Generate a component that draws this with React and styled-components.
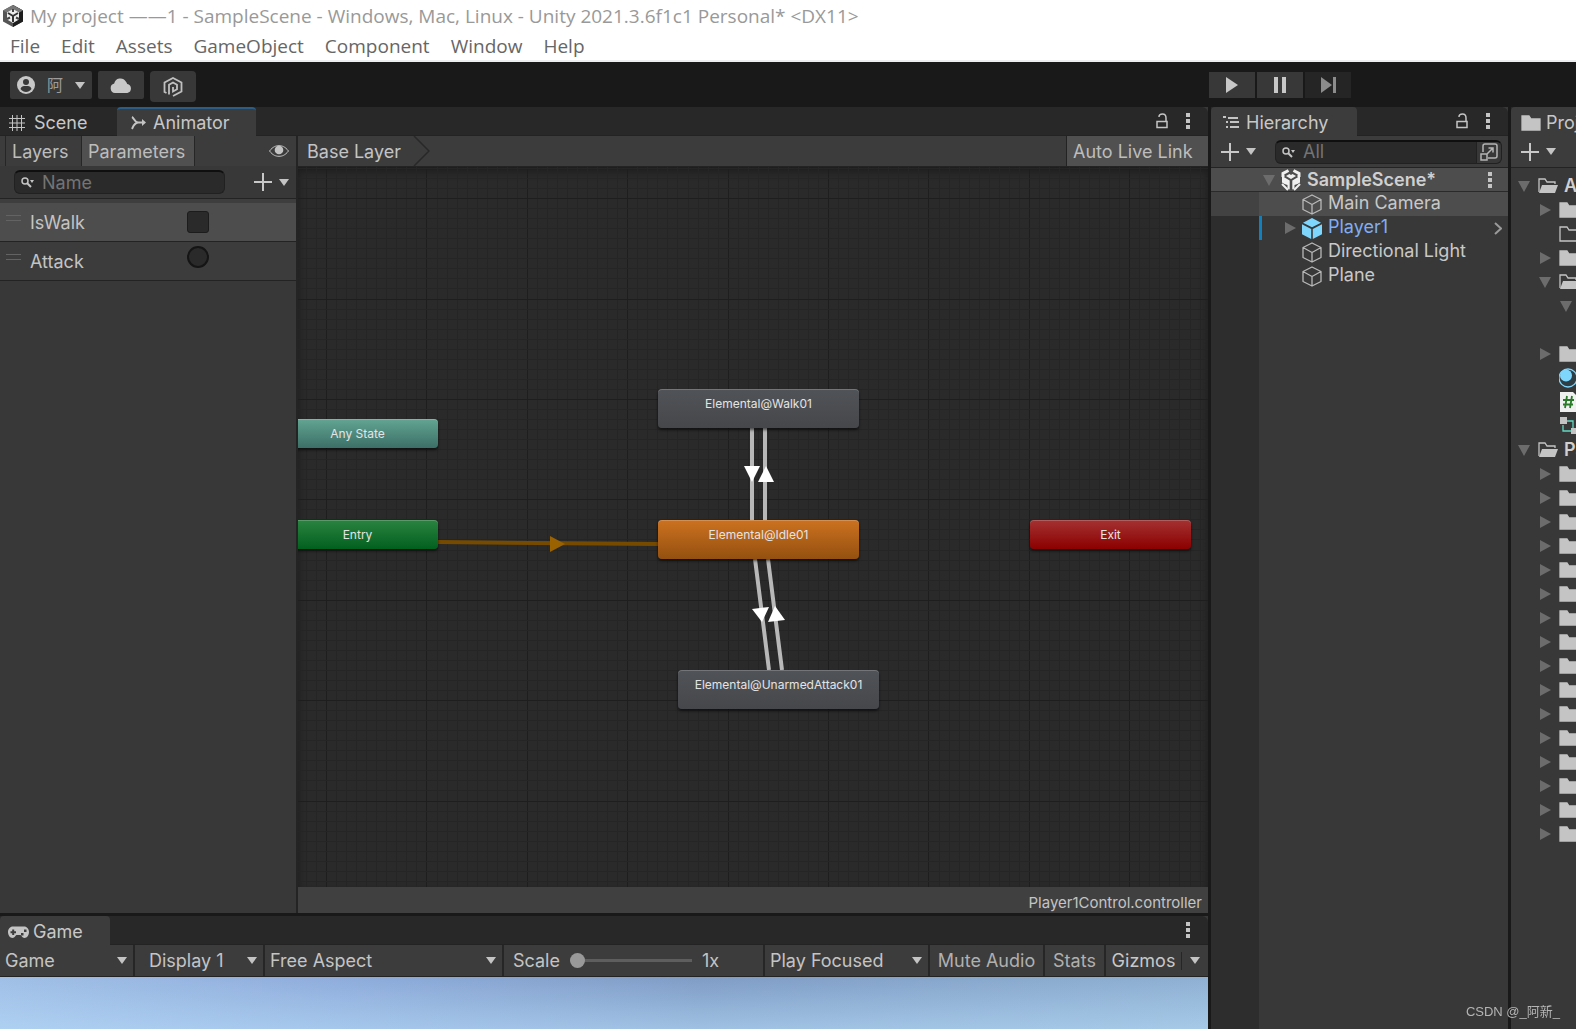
import React, { useState } from "react";
import styled, { createGlobalStyle, css } from "styled-components";

const GlobalStyle = createGlobalStyle`
    * {
        box-sizing: border-box;
    }

    body {
        margin: 0;
        background: #191919;
        font-family: Inter, "Noto Sans CJK SC", sans-serif;
        font-size: 18px;
        line-height: 24px;
        color: #c4c4c4;
    }

    button, input, select {
        font: inherit;
        color: inherit;
        margin: 0;
    }

    svg {
        display: block;
        flex-shrink: 0;
    }
`;

const MENUS = ["File", "Edit", "Assets", "GameObject", "Component", "Window", "Help"];

const NODES = [
    { label: "Any State", kind: "any", x: -21, y: 252 },
    { label: "Entry", kind: "entry", x: -21, y: 353 },
    { label: "Exit", kind: "exit", x: 732, y: 353 },
    { label: "Elemental@Walk01", kind: "state", x: 360, y: 222 },
    { label: "Elemental@Idle01", kind: "initial", x: 360, y: 353 },
    { label: "Elemental@UnarmedAttack01", kind: "state", x: 380, y: 503 },
];

const NODE_COLORS = {
    any: ["#62a592", "#3c6f67"],
    entry: ["#2b8340", "#02601f"],
    exit: ["#a43232", "#8c0000"],
    state: ["#505357", "#46474b"],
    initial: ["#cc7220", "#945010"],
};

const OBJECTS = [
    { name: "Main Camera", selected: true },
    { name: "Player1", prefab: true },
    { name: "Directional Light" },
    { name: "Plane" },
];

const PROJECT_ROWS = [
    { depth: 0, arrow: "down", icon: "open", name: "Assets" },
    { depth: 1, arrow: "right", icon: "folder" },
    { depth: 1, icon: "empty" },
    { depth: 1, arrow: "right", icon: "folder" },
    { depth: 1, arrow: "down", icon: "open" },
    { depth: 2, arrow: "down" },
    { depth: 2 },
    { depth: 1, arrow: "right", icon: "folder" },
    { depth: 1, icon: "material" },
    { depth: 1, icon: "script" },
    { depth: 1, icon: "controller" },
    { depth: 0, arrow: "down", icon: "open", name: "Packages" },
    ...Array.from({ length: 16 }, () => ({ depth: 1, arrow: "right", icon: "folder" })),
];

/* ---------- icons ---------- */

const UnityLogo = () => (
    <svg width="22" height="24" viewBox="0 0 22 24">
        <path d="M11 1L21 6.500V17.500L11 23L1 17.500V6.500Z" fill="#555" />
        <path d="M11 1L21 6.500V17.500L11 23V12Z" fill="#1d1d1d" />
        <path d="M11 1L21 6.500L11 12L1 6.500Z" fill="#777" />
        <path d="M11 5L17 8.500V15.500L11 19L5 15.500V8.500Z" fill="#eee" />
        <path d="M11 12V18M11 12L6 9M11 12L16 9" stroke="#333" strokeWidth="2" />
        <path d="M11 5V8M5 15L8 13.500M17 15L14 13.500" stroke="#444" strokeWidth="2" />
    </svg>
);

const SceneLogo = () => (
    <svg width="20" height="22" viewBox="0 0 20 22">
        <path d="M7.500 1.500L2 4.500V8M12.500 1.500L18 4.500V8" fill="none" stroke="#f0f0f0" strokeWidth="3" />
        <path d="M5 7L8.500 5L10 6L11.500 5L15 7L10 10Z" fill="#f0f0f0" />
        <path d="M1 7L8.700 11.500V20.500L6.500 19.500V16L3.500 15L1 13.500Z" fill="#f0f0f0" />
        <path d="M19 7L11.300 11.500V20.500L13.500 19.500V16L16.500 15L19 13.500Z" fill="#f0f0f0" />
        <path d="M1 15L4 18L7 21M19 15L16 18L13 21" fill="none" stroke="#f0f0f0" strokeWidth="2" />
    </svg>
);

const UserIcon = () => (
    <svg width="18" height="18" viewBox="0 0 18 18">
        <circle cx="9" cy="9" r="9" fill="#c8c8c8" />
        <circle cx="9" cy="6" r="3" fill="#383838" />
        <path d="M3.500 13C4 10.500 6 10 9 10S14 10.500 14.500 13C13 15 11 16 9 16S5 15 3.500 13Z" fill="#383838" />
    </svg>
);

const CloudIcon = () => (
    <svg width="22" height="15" viewBox="0 0 22 15" fill="#c8c8c8">
        <path d="M5 15A4.800 4.800 0 0 1 4.200 5.600A6.300 6.300 0 0 1 15.800 3.500A5 5 0 0 1 17.200 6A4.600 4.600 0 0 1 17.400 15Z" />
    </svg>
);

const PlasticIcon = () => (
    <svg width="20" height="20" viewBox="0 0 20 20" fill="none" stroke="#c0c0c0" strokeWidth="1.800">
        <path d="M3.500 16L1.500 15V5.500L10 1L18.500 5.500V14.500L10 19" />
        <path d="M6 17.500V7.800L10 5.500L14 7.800V12.200L10 14.500V10" />
    </svg>
);

const Caret = ({ color = "#c4c4c4" }) => (
    <svg width="10" height="7" viewBox="0 0 10 7">
        <path d="M0 0H10L5 7Z" fill={color} />
    </svg>
);

const Foldout = ({ open }) => (
    <svg width="12" height="12" viewBox="0 0 12 12" fill="#6c6c6c">
        <path d={open ? "M0 1H12L6 12Z" : "M1 0L12 6L1 12Z"} />
    </svg>
);

const GridIcon = () => (
    <svg width="16" height="16" viewBox="0 0 16 16" stroke="#c4c4c4">
        <path d="M3.500 0V16M8 0V16M12.500 0V16M0 3.500H16M0 8H16M0 12.500H16" fill="none" />
    </svg>
);

const AnimatorIcon = () => (
    <svg width="16" height="14" viewBox="0 0 16 14" fill="none" stroke="#c4c4c4" strokeWidth="2">
        <path d="M1 1C3 2 3 6 7 6.500H13M1 13C2 11 3 7 7 6.500" />
        <path d="M11 3L15 6.500L11 10Z" fill="#c4c4c4" stroke="none" />
    </svg>
);

const HierarchyIcon = () => (
    <svg width="16" height="14" viewBox="0 0 16 14" fill="#c4c4c4">
        <path d="M0 0H3V2H0ZM5 1H15V3H5ZM3 5H5V7H3ZM7 5H16V7H7ZM3 10H5V12H3ZM7 10H16V12H7Z" />
    </svg>
);

const GameIcon = () => (
    <svg width="21" height="12" viewBox="0 0 21 12">
        <path d="M5 0.500H16C19 0.500 21 3 21 6S19 12 16.500 12C14 12 13.500 9 12.500 9H8.500C7.500 9 7 12 4.500 12C2 12 0 9 0 6S2 0.500 5 0.500Z" fill="#c4c4c4" />
        <path d="M5.200 3.500V9M2.500 6.200H8" stroke="#3c3c3c" strokeWidth="2" />
        <path d="M13 7H15.500V9.500H13ZM16 3.500H18.500V6H16Z" fill="#3c3c3c" />
    </svg>
);

const LockIcon = () => (
    <svg width="12" height="16" viewBox="0 0 12 16" fill="none" stroke="#c4c4c4" strokeWidth="1.500">
        <path d="M1 8.500H11V14.500H1Z" />
        <path d="M10 8V5C10 2 9 1 6.500 1S3 2 3 4" />
    </svg>
);

const DotsIcon = () => (
    <svg width="4" height="16" viewBox="0 0 4 16" fill="#c4c4c4">
        <path d="M0 0H4V4H0ZM0 6H4V10H0ZM0 12H4V16H0Z" />
    </svg>
);

const EyeIcon = () => (
    <svg width="20" height="12" viewBox="0 0 20 12">
        <path d="M0.500 6C4 1.500 7 0.700 10 0.700S16 1.500 19.500 6C16 10.500 13 11.300 10 11.300S4 10.500 0.500 6Z" fill="none" stroke="#c4c4c4" />
        <circle cx="10" cy="5" r="4.300" fill="#c4c4c4" />
    </svg>
);

const SearchIcon = () => (
    <svg width="13" height="11" viewBox="0 0 13 11" fill="none" stroke="#c4c4c4" strokeWidth="1.500">
        <circle cx="4" cy="4" r="3" />
        <path d="M6 6L10 10" strokeWidth="2" />
        <path d="M9 3H13L11 6Z" fill="#c4c4c4" stroke="none" />
    </svg>
);

const PlusIcon = () => (
    <svg width="18" height="18" viewBox="0 0 18 18">
        <path d="M9 0V18M0 9H18" stroke="#c8c8c8" strokeWidth="2" />
    </svg>
);

const PickerIcon = () => (
    <svg width="18" height="18" viewBox="0 0 18 18" fill="none" stroke="#b4b4b4" strokeWidth="1.500">
        <path d="M3 9V3Q3 1 5 1H15Q17 1 17 3V13Q17 15 15 15H8" />
        <path d="M1 11H7V17H1ZM7.500 10.500L13 5M8.500 5H13V9.500" />
    </svg>
);

const CubeIcon = ({ prefab }) => (
    <svg width="20" height="21" viewBox="0 0 20 21" strokeLinejoin="round">
        {prefab ? (
            <g fill="#7fd6fd">
                <path d="M10 0L19 4.800L10 9.300L1 4.800Z" />
                <path d="M0 6.300L9.200 11V21L0 16.200Z" />
                <path d="M20 6.300L10.800 11V21L20 16.200Z" />
            </g>
        ) : (
            <path d="M10 1L19 5.500V15.500L10 20L1 15.500V5.500ZM1 5.500L10 10.500L19 5.500M10 10.500V20" fill="none" stroke="#b8b8b8" strokeWidth="1.300" />
        )}
    </svg>
);

const ChevronIcon = () => (
    <svg width="8" height="13" viewBox="0 0 8 13">
        <path d="M1 1L7 6.500L1 12" fill="none" stroke="#9a9a9a" strokeWidth="2" />
    </svg>
);

const AssetIcon = ({ kind }) => {
    if (kind === "material") {
        return (
            <svg width="20" height="20" viewBox="0 0 20 20">
                <circle cx="9" cy="10" r="9" fill="#2f3e45" stroke="#7fd6fd" strokeWidth="1.300" />
                <circle cx="7" cy="7.500" r="6" fill="#7fd6fd" />
            </svg>
        );
    }
    if (kind === "script") {
        return (
            <svg width="20" height="20" viewBox="0 0 20 20">
                <path d="M1 0H14L19 5V20H1Z" fill="#f0f0f0" />
                <path d="M8 4L6 16M13 4L11 16M4 8H15M4 12.500H14" stroke="#2a7a2a" strokeWidth="1.800" />
            </svg>
        );
    }
    if (kind === "controller") {
        return (
            <svg width="20" height="18" viewBox="0 0 20 18">
                <path d="M8 4H14V11M4 8V14H12" fill="none" stroke="#5fd9c0" strokeWidth="1.300" />
                <path d="M1 0H8V7H1ZM12 11H19V17H12Z" fill="#c4c4c4" />
            </svg>
        );
    }
    if (kind === "open") {
        return (
            <svg width="20" height="16" viewBox="0 0 20 16">
                <path d="M1 14V1H7L9 4H17V6" fill="none" stroke="#c4c4c4" strokeWidth="1.300" />
                <path d="M4 7H20L17 15H1Z" fill="#c4c4c4" />
            </svg>
        );
    }
    return (
        <svg width="20" height="16" viewBox="0 0 20 16">
            <path
                d="M1 1H8L10 4H19V15H1Z"
                fill={kind === "empty" ? "none" : "#c4c4c4"}
                stroke="#c4c4c4"
                strokeWidth="1.300"
            />
        </svg>
    );
};

/* ---------- window header ---------- */

const Window = styled.div`
    display: flex;
    flex-direction: column;
    height: 100vh;
    overflow: hidden;
`;

const TitleBar = styled.header`
    background: #fff;
    border-bottom: 2px solid #eceff0;
    font-family: "Open Sans", "Noto Sans CJK SC", sans-serif;
`;

const Title = styled.h1`
    display: flex;
    align-items: center;
    gap: 6px;
    height: 31px;
    margin: 0;
    padding-left: 2px;
    font-size: 19px;
    font-weight: 400;
    color: #999;
    white-space: pre;
`;

const MenuBar = styled.nav`
    display: flex;
    gap: 21px;
    height: 29px;
    padding-left: 10px;
`;

const MenuButton = styled.button`
    padding: 0;
    border: none;
    background: none;
    font-size: 19px;
    color: #666;
    cursor: pointer;
`;

const AppToolbar = styled.div`
    display: flex;
    align-items: flex-start;
    gap: 6px;
    height: 45px;
    flex-shrink: 0;
    padding: 9px 0 0 10px;
    background: #191919;
`;

const ToolButton = styled.button`
    display: flex;
    align-items: center;
    justify-content: center;
    gap: 12px;
    width: ${({ $wide }) => ($wide ? 82 : 46)}px;
    height: ${({ $tall }) => ($tall ? 31 : 28)}px;
    padding: 0;
    border: none;
    border-radius: ${({ $tall }) => ($tall ? 4 : 2)}px;
    background: #383838;
    font-size: 16px;
    color: #9c9c9c;
    cursor: pointer;
`;

const PlayGroup = styled.div`
    display: flex;
    gap: 2px;
    margin: 1px 225px 0 auto;
`;

const PlayButton = styled.button`
    display: flex;
    align-items: center;
    justify-content: center;
    width: 46px;
    height: 26px;
    padding: 0;
    border: none;
    background: ${({ disabled }) => (disabled ? "#252525" : "#383838")};
`;

/* ---------- docking ---------- */

const Workspace = styled.div`
    display: flex;
    gap: 3px;
    flex: 1;
    min-height: 0;
    background: #191919;
`;

const Column = styled.div`
    display: flex;
    flex-direction: column;
    gap: 3px;
    flex: 1;
    min-width: 0;
`;

const Panel = styled.section`
    display: flex;
    flex-direction: column;
    min-width: 0;
    min-height: 0;
    overflow: hidden;
    background: #383838;
    ${({ $grow }) => $grow && css`flex: 1;`}
    ${({ $width }) => $width && css`width: ${$width}px; flex-shrink: 0;`}
    ${({ $height }) => $height && css`height: ${$height}px; flex-shrink: 0;`}
`;

const TabBar = styled.div`
    display: flex;
    height: 29px;
    flex-shrink: 0;
    padding-right: 18px;
    border-bottom: 1px solid #232323;
    border-radius: 0 6px 0 0;
    background: #282828;
`;

const Tab = styled.button`
    display: flex;
    align-items: center;
    gap: ${({ $gap = 7 }) => $gap}px;
    width: ${({ $width }) => $width}px;
    height: 29px;
    flex-shrink: 0;
    padding: 0 0 0 ${({ $pad = 12 }) => $pad}px;
    border: none;
    border-top: 2px solid ${({ $focused }) => ($focused ? "#2c5d87" : "transparent")};
    border-radius: 4px 4px 0 0;
    background: ${({ $active }) => ($active ? "#3c3c3c" : "transparent")};
    color: #c8c8c8;
    white-space: nowrap;
`;

const TabTools = styled.div`
    display: flex;
    align-items: center;
    gap: 18px;
    margin-left: auto;
`;

const IconButton = styled.button`
    display: flex;
    align-items: center;
    gap: 7px;
    padding: 0;
    border: none;
    background: none;
    cursor: pointer;
`;

const SearchField = styled.label`
    display: flex;
    align-items: center;
    gap: 8px;
    flex: 1;
    min-width: 0;
    height: 24px;
    padding-left: 6px;
    overflow: hidden;
    border: 1px solid #212121;
    border-top: 2px solid #0f0f0f;
    border-radius: 6px;
    background: #2a2a2a;

    input {
        flex: 1;
        min-width: 0;
        height: 20px;
        padding: 0;
        border: none;
        outline: none;
        background: none;
    }

    input::placeholder {
        color: #747474;
        opacity: 1;
    }
`;

const PickerButton = styled(IconButton)`
    justify-content: center;
    width: 25px;
    height: 22px;
    border-left: 1px solid #212121;
    background: #383838;
`;

/* ---------- animator ---------- */

const AnimatorBody = styled.div`
    display: flex;
    flex: 1;
    min-height: 0;
`;

const Sidebar = styled.aside`
    width: 298px;
    flex-shrink: 0;
    border-right: 2px solid #242424;
`;

const SidebarTabs = styled.div`
    display: flex;
    align-items: center;
    height: 30px;
    padding: 0 7px 0 5px;
    background: #3c3c3c;

    & > :last-child {
        margin-left: auto;
    }
`;

const SidebarTab = styled.button`
    width: ${({ $active }) => ($active ? 113 : 77)}px;
    height: 30px;
    padding: 2px 0 0 6px;
    border: solid #262626;
    border-width: 0 1px 0 ${({ $active }) => ($active ? 0 : 1)}px;
    background: ${({ $active }) => ($active ? "#505050" : "#3c3c3c")};
    color: #bdbdbd;
    text-align: left;
`;

const SidebarSearch = styled.div`
    display: flex;
    align-items: center;
    gap: 29px;
    height: 33px;
    padding: 0 7px 0 14px;
    border-bottom: 1px solid #232323;
`;

const ParameterList = styled.ul`
    margin: 0;
    padding: 4px 0 0;
    list-style: none;
    background: #3e3e3e;
`;

const ParameterRow = styled.li`
    display: flex;
    align-items: center;
    height: 39px;
    padding: 0 87px 0 6px;
    border-bottom: 1px solid #232323;
    background: ${({ $selected }) => ($selected ? "#4d4d4d" : "#3c3c3c")};

    label {
        flex: 1;
        padding: 2px 0 0 9px;
    }

    input {
        appearance: none;
        width: 22px;
        height: 22px;
        margin-bottom: ${({ $trigger }) => ($trigger ? 8 : 0)}px;
        border: ${({ $trigger }) => ($trigger ? "2px solid #151515" : "1px solid #1c1c1c")};
        border-radius: ${({ $trigger }) => ($trigger ? "50%" : "3px")};
        background: #2a2a2a;
    }

    input:checked {
        background: #585858;
    }
`;

const DragHandle = styled.span`
    width: 15px;
    height: 6px;
    margin-bottom: 8px;
    border: solid #636363;
    border-width: 1px 0;
`;

const GraphPane = styled.div`
    display: flex;
    flex-direction: column;
    flex: 1;
    min-width: 0;
`;

const Breadcrumbs = styled.div`
    display: flex;
    justify-content: space-between;
    height: 31px;
    flex-shrink: 0;
    border-bottom: 1px solid #232323;
    background: #3c3c3c;
`;

const Crumb = styled.button`
    display: flex;
    align-items: center;
    gap: 12px;
    padding: 0 0 0 9px;
    border: none;
    background: none;

    span {
        padding-top: 2px;
    }
`;

const LiveLink = styled.button`
    width: 142px;
    padding: 2px 0 0 6px;
    border: none;
    border-left: 1px solid #232323;
    background: #505050;
    color: #bdbdbd;
    text-align: left;
`;

const GraphCanvas = styled.div`
    position: relative;
    flex: 1;
    overflow: hidden;
    background: #2a2a2a;
    box-shadow: inset 0 4px 8px rgba(0, 0, 0, 0.35);
`;

const GraphSvg = styled.svg`
    position: absolute;
    inset: 0;
    width: 100%;
    height: 100%;
`;

const StateNode = styled.div`
    position: absolute;
    left: ${({ $x }) => $x}px;
    top: ${({ $y }) => $y}px;
    width: ${({ $big }) => ($big ? 201 : 161)}px;
    height: ${({ $big }) => ($big ? 39 : 29)}px;
    border-radius: 4px;
    background: linear-gradient(${({ $kind }) => NODE_COLORS[$kind].join(", ")});
    box-shadow: inset 0 1px 0 rgba(255, 255, 255, 0.2), 0 2px 3px rgba(0, 0, 0, 0.6);
    font-size: 12px;
    line-height: 29px;
    text-align: center;
    color: #e4e4e4;
`;

const StatusBar = styled.footer`
    height: 26px;
    flex-shrink: 0;
    padding-right: 6px;
    background: #404040;
    font-size: 15px;
    line-height: 32px;
    text-align: right;
`;

/* ---------- game ---------- */

const GameToolbar = styled.div`
    display: flex;
    height: 32px;
    flex-shrink: 0;
    border-bottom: 1px solid #232323;
    background: #3c3c3c;
`;

const DropdownBox = styled.div`
    display: grid;
    align-items: center;
    width: ${({ $width }) => $width}px;
    border-right: 2px solid #262626;

    select, svg {
        grid-area: 1 / 1;
    }

    svg {
        justify-self: end;
        margin-right: 6px;
        pointer-events: none;
    }

    select {
        appearance: none;
        width: 100%;
        height: 31px;
        padding: 0 0 0 ${({ $pad = 5 }) => $pad}px;
        border: none;
        background: none;
    }
`;

const ScaleControl = styled.label`
    display: flex;
    align-items: center;
    gap: 10px;
    flex: 1;
    padding-left: 9px;
    border-right: 2px solid #262626;

    input {
        appearance: none;
        width: 122px;
        height: 15px;
        background: linear-gradient(#5e5e5e, #5e5e5e) center / 100% 3px no-repeat;
    }

    input::-webkit-slider-thumb {
        appearance: none;
        width: 15px;
        height: 15px;
        border-radius: 50%;
        background: #999;
    }
`;

const GameButton = styled.button`
    width: ${({ $width }) => $width}px;
    padding: 0;
    border: none;
    border-right: 2px solid #262626;
    background: none;
    color: #b0b0b0;
`;

const GizmosButton = styled(GameButton)`
    border: none;
    color: #c8c8c8;
`;

const GizmosMenu = styled(IconButton)`
    justify-content: center;
    align-self: center;
    width: 27px;
    height: 18px;
    border-left: 1px solid #262626;
`;

const GameView = styled.div`
    flex: 1;
    background:
        linear-gradient(rgba(190, 225, 255, 0) 0%, rgba(185, 222, 250, 0.55) 100%),
        linear-gradient(90deg, #a0bfe6 0%, #8facdb 28%, #7f9cc5 58%, #8fb0d2 100%);
`;

/* ---------- hierarchy / project ---------- */

const PanelToolbar = styled.div`
    display: flex;
    align-items: center;
    gap: 19px;
    height: 32px;
    flex-shrink: 0;
    padding: 0 6px 0 10px;
    border-bottom: 1px solid #232323;
    background: #3c3c3c;
`;

const SceneRow = styled.div`
    display: flex;
    align-items: center;
    gap: 6px;
    height: 24px;
    flex-shrink: 0;
    padding: 0 16px 0 52px;
    border-bottom: 1px solid #2a2a2a;
    background: #4d4d4d;
    font-weight: 600;
    line-height: 22px;
    color: #d0d0d0;

    & > :last-child {
        margin-left: auto;
    }
`;

const ObjectList = styled.ul`
    flex: 1;
    margin: 0;
    padding: 0;
    list-style: none;
    background: linear-gradient(90deg, #2d2d2d 48px, #383838 48px);
`;

const ObjectRow = styled.li`
    display: flex;
    align-items: center;
    gap: 6px;
    height: 24px;
    margin-left: ${({ $selected }) => ($selected ? 0 : 48)}px;
    padding: 0 6px 0 ${({ $selected, $prefab }) => ($selected ? 91 : $prefab ? 22 : 43)}px;
    background: ${({ $selected }) => ($selected ? "linear-gradient(90deg, #424242 48px, #4d4d4d 48px)" : "none")};
    color: #c8c8c8;

    span {
        padding-bottom: 2px;
    }

    ${({ $prefab }) => $prefab && css`
        border-left: 3px solid #0f81be;
        color: #7faef5;

        & > :last-child {
            margin-left: auto;
        }
    `}
`;

const AssetList = styled.ul`
    margin: 0;
    padding: 6px 0 0;
    list-style: none;
`;

const AssetRow = styled.li`
    display: flex;
    align-items: center;
    gap: 6px;
    height: 24px;
    padding-left: ${({ $depth }) => 7 + $depth * 21}px;
    font-weight: 600;
    color: #d0d0d0;
`;

const FoldoutSlot = styled.span`
    width: 14px;
    flex-shrink: 0;
`;

const Watermark = styled.div`
    position: fixed;
    right: 16px;
    bottom: 5px;
    font-family: "Liberation Sans", "Noto Sans CJK SC", sans-serif;
    font-size: 13px;
    color: #b4b4b4;
`;

const Grid = () => {
    const lines = Array.from({ length: 300 }, (_, i) => i);
    // a cell is a touch more than 10px at this zoom level
    const at = (i, offset) => Math.round(i * 10.04 + offset) + 0.5;
    const color = (major) => (major ? "#1e1e1e" : "#252525");

    return (
        <g>
            {lines.map((i) => (
                <line key={`x${i}`} x1={at(i, 8)} x2={at(i, 8)} y1="0" y2="100%" stroke={color(i % 10 === 2)} />
            ))}
            {lines.map((i) => (
                <line key={`y${i}`} y1={at(i, 1)} y2={at(i, 1)} x1="0" x2="100%" stroke={color(i % 10 === 3)} />
            ))}
        </g>
    );
};

const Transitions = () => (
    <g>
        <path d="M140 375L360 377" stroke="#764b00" strokeWidth="4" />
        <path d="M252 369V385L267 377Z" fill="#9a6200" />
        <g stroke="#b8b8b8" strokeWidth="4">
            <path d="M454 261V353M467 261V353M457 392L471 503M470 392L484 503" />
        </g>
        <g fill="#fff">
            <path d="M446 299H462L454 315Z" />
            <path d="M460 315H476L468 299Z" />
            <path d="M454 442L471 440L464 455Z" />
            <path d="M470 455L487 453L477 439Z" />
        </g>
    </g>
);

const Dropdown = ({ label, value, width, pad }) => (
    <DropdownBox $width={width} $pad={pad}>
        <select aria-label={label}>
            <option>{value}</option>
        </select>
        <Caret />
    </DropdownBox>
);

const AnimatorPanel = () => {
    const [isWalk, setIsWalk] = useState(false);

    return (
        <Panel $grow>
            <TabBar>
                <Tab $width={117} $pad={9} $gap={9}><GridIcon />Scene</Tab>
                <Tab $width={139} $pad={14} $gap={6} $active $focused><AnimatorIcon />Animator</Tab>
                <TabTools>
                    <IconButton aria-label="Lock"><LockIcon /></IconButton>
                    <IconButton aria-label="More"><DotsIcon /></IconButton>
                </TabTools>
            </TabBar>
            <AnimatorBody>
                <Sidebar>
                    <SidebarTabs>
                        <SidebarTab>Layers</SidebarTab>
                        <SidebarTab $active>Parameters</SidebarTab>
                        <IconButton aria-label="Hide sidebar"><EyeIcon /></IconButton>
                    </SidebarTabs>
                    <SidebarSearch>
                        <SearchField>
                            <SearchIcon />
                            <input type="text" placeholder="Name" aria-label="Search parameters" />
                        </SearchField>
                        <IconButton aria-label="Add parameter"><PlusIcon /><Caret /></IconButton>
                    </SidebarSearch>
                    <ParameterList>
                        <ParameterRow $selected>
                            <DragHandle />
                            <label htmlFor="isWalk">IsWalk</label>
                            <input
                                id="isWalk"
                                type="checkbox"
                                checked={isWalk}
                                onChange={(e) => setIsWalk(e.target.checked)}
                            />
                        </ParameterRow>
                        <ParameterRow $trigger>
                            <DragHandle />
                            <label htmlFor="attack">Attack</label>
                            <input id="attack" type="radio" />
                        </ParameterRow>
                    </ParameterList>
                </Sidebar>
                <GraphPane>
                    <Breadcrumbs>
                        <Crumb>
                            <span>Base Layer</span>
                            <svg width="17" height="30" viewBox="0 0 17 30">
                                <path d="M1 0L16 15L1 30" fill="none" stroke="#282828" strokeWidth="1.500" />
                            </svg>
                        </Crumb>
                        <LiveLink>Auto Live Link</LiveLink>
                    </Breadcrumbs>
                    <GraphCanvas>
                        <GraphSvg>
                            <Grid />
                            <Transitions />
                        </GraphSvg>
                        {NODES.map((node) => (
                            <StateNode
                                key={node.label}
                                $kind={node.kind}
                                $x={node.x}
                                $y={node.y}
                                $big={node.kind === "state" || node.kind === "initial"}
                            >
                                {node.label}
                            </StateNode>
                        ))}
                    </GraphCanvas>
                    <StatusBar>Player1Control.controller</StatusBar>
                </GraphPane>
            </AnimatorBody>
        </Panel>
    );
};

const GamePanel = () => {
    const [scale, setScale] = useState(1);

    return (
        <Panel $height={113}>
            <TabBar>
                <Tab $width={110} $pad={8} $gap={4} $active><GameIcon />Game</Tab>
                <TabTools>
                    <IconButton aria-label="More"><DotsIcon /></IconButton>
                </TabTools>
            </TabBar>
            <GameToolbar>
                <Dropdown label="View" value="Game" width={135} />
                <Dropdown label="Display" value="Display 1" width={130} pad={14} />
                <Dropdown label="Aspect" value="Free Aspect" width={239} />
                <ScaleControl>
                    Scale
                    <input
                        type="range"
                        min="1"
                        max="5"
                        step="0.1"
                        value={scale}
                        onChange={(e) => setScale(Number(e.target.value))}
                    />
                    {scale}x
                </ScaleControl>
                <Dropdown label="Play mode" value="Play Focused" width={165} />
                <GameButton $width={115}>Mute Audio</GameButton>
                <GameButton $width={61}>Stats</GameButton>
                <GizmosButton $width={75}>Gizmos</GizmosButton>
                <GizmosMenu aria-label="Gizmos menu"><Caret /></GizmosMenu>
            </GameToolbar>
            <GameView />
        </Panel>
    );
};

const HierarchyPanel = () => (
    <Panel $width={297}>
        <TabBar>
            <Tab $width={146} $active><HierarchyIcon />Hierarchy</Tab>
            <TabTools>
                <IconButton aria-label="Lock"><LockIcon /></IconButton>
                <IconButton aria-label="More"><DotsIcon /></IconButton>
            </TabTools>
        </TabBar>
        <PanelToolbar>
            <IconButton aria-label="Create"><PlusIcon /><Caret /></IconButton>
            <SearchField>
                <SearchIcon />
                <input type="text" placeholder="All" aria-label="Search hierarchy" />
                <PickerButton aria-label="Open search"><PickerIcon /></PickerButton>
            </SearchField>
        </PanelToolbar>
        <SceneRow>
            <Foldout open />
            <SceneLogo />
            SampleScene*
            <IconButton aria-label="Scene menu"><DotsIcon /></IconButton>
        </SceneRow>
        <ObjectList>
            {OBJECTS.map((object) => (
                <ObjectRow key={object.name} $selected={object.selected} $prefab={object.prefab}>
                    {object.prefab && <Foldout />}
                    <CubeIcon prefab={object.prefab} />
                    <span>{object.name}</span>
                    {object.prefab && <ChevronIcon />}
                </ObjectRow>
            ))}
        </ObjectList>
    </Panel>
);

const ProjectPanel = () => (
    <Panel $width={65}>
        <TabBar>
            <Tab $width={120} $pad={10} $gap={5} $active>
                <AssetIcon kind="folder" />
                Project
            </Tab>
        </TabBar>
        <PanelToolbar>
            <IconButton aria-label="Create asset"><PlusIcon /><Caret /></IconButton>
        </PanelToolbar>
        <AssetList>
            {PROJECT_ROWS.map((row, i) => (
                <AssetRow key={i} $depth={row.depth}>
                    <FoldoutSlot>{row.arrow && <Foldout open={row.arrow === "down"} />}</FoldoutSlot>
                    {row.icon && <AssetIcon kind={row.icon} />}
                    {row.name}
                </AssetRow>
            ))}
        </AssetList>
    </Panel>
);

const App = () => (
    <Window>
        <GlobalStyle />
        <TitleBar>
            <Title>
                <UnityLogo />
                <span>My project ——1 - SampleScene - Windows, Mac, Linux - Unity 2021.3.6f1c1 Personal* &lt;DX11&gt;</span>
            </Title>
            <MenuBar>
                {MENUS.map((menu) => (
                    <MenuButton key={menu}>{menu}</MenuButton>
                ))}
            </MenuBar>
        </TitleBar>
        <AppToolbar>
            <ToolButton $wide><UserIcon />阿<Caret /></ToolButton>
            <ToolButton aria-label="Cloud"><CloudIcon /></ToolButton>
            <ToolButton $tall aria-label="Version control"><PlasticIcon /></ToolButton>
            <PlayGroup>
                <PlayButton aria-label="Play">
                    <svg width="12" height="16" viewBox="0 0 12 16"><path d="M0 0L12 8L0 16Z" fill="#c8c8c8" /></svg>
                </PlayButton>
                <PlayButton aria-label="Pause">
                    <svg width="12" height="16" viewBox="0 0 12 16"><path d="M0 0H4V16H0ZM8 0H12V16H8Z" fill="#c8c8c8" /></svg>
                </PlayButton>
                <PlayButton aria-label="Step" disabled>
                    <svg width="15" height="16" viewBox="0 0 15 16"><path d="M0 0L11 8L0 16ZM12 0H15V16H12Z" fill="#8c8c8c" /></svg>
                </PlayButton>
            </PlayGroup>
        </AppToolbar>
        <Workspace>
            <Column>
                <AnimatorPanel />
                <GamePanel />
            </Column>
            <HierarchyPanel />
            <ProjectPanel />
        </Workspace>
        <Watermark>CSDN @_阿新_</Watermark>
    </Window>
);

export default App;
